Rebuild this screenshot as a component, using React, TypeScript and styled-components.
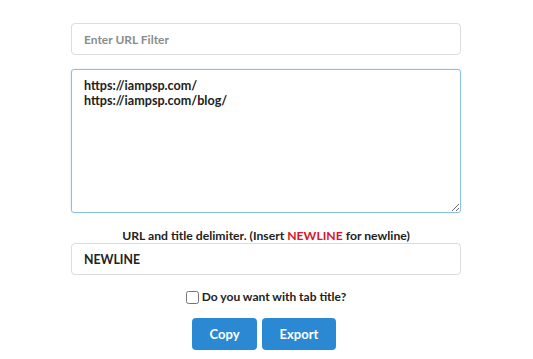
import React from "react";
import styled, { createGlobalStyle } from "styled-components";

const Global = createGlobalStyle`
  html, body { margin: 0; padding: 0; background: #fff; }
  body { font-family: Lato, "Open Sans", sans-serif; color: #333; }
  * { box-sizing: border-box; }
`;

const Page = styled.div`
  width: 390px;
  margin: 0 0 0 71px;
  padding-top: 23px;
  display: flex;
  flex-direction: column;
`;

const TextInput = styled.input<{ $bold?: boolean }>`
  width: 100%;
  height: 32px;
  border: 1px solid #dcdcdc;
  border-radius: 4px;
  padding: 0 12px;
  font-family: Lato, sans-serif;
  font-size: ${(p) => (p.$bold ? "12.3px" : "12px")};
  font-weight: 700;
  color: #222;
  outline: none;
  &::placeholder { color: #8c8c8c; font-weight: 700; }
`;

const Area = styled.textarea`
  margin-top: 14px;
  width: 100%;
  height: 144px;
  border: 1px solid #8fbfe0;
  border-radius: 3px;
  padding: 8px 12px;
  font-family: Lato, sans-serif;
  font-size: 12.6px;
  font-weight: 700;
  line-height: 15px;
  color: #222;
  outline: none;
  resize: both;
  box-shadow: 0 0 2px rgba(102, 175, 233, 0.35);
`;

const Label = styled.div`
  margin-top: 16px;
  text-align: center;
  font-size: 12.2px;
  font-weight: 700;
  color: #222;
  line-height: 14px;
`;

const Red = styled.span`
  color: #e0141e;
`;

const CheckRow = styled.label`
  margin-top: 14px;
  display: flex;
  align-items: center;
  justify-content: center;
  gap: 3px;
  font-size: 12px;
  font-weight: 700;
  color: #222;
  line-height: 16px;
  input { margin: 0; width: 13px; height: 13px; }
`;

const Buttons = styled.div`
  margin-top: 13px;
  display: flex;
  justify-content: center;
  gap: 5px;
  padding-right: 4px;
`;

const Btn = styled.button<{ $w: number }>`
  width: ${(p) => p.$w}px;
  height: 32px;
  border: none;
  border-radius: 4px;
  background: #2b88d2;
  color: #fff;
  font-family: Lato, sans-serif;
  font-size: 13px;
  font-weight: 700;
  cursor: pointer;
`;

export default function App() {
  return (
    <>
      <Global />
      <Page>
        <TextInput placeholder="Enter URL Filter" />
        <Area defaultValue={"https://iampsp.com/\nhttps://iampsp.com/blog/"} />
        <Label>
          URL and title delimiter. (Insert <Red>NEWLINE</Red> for newline)
        </Label>
        <TextInput $bold defaultValue="NEWLINE" />
        <CheckRow>
          <input type="checkbox" />
          Do you want with tab title?
        </CheckRow>
        <Buttons>
          <Btn $w={65}>Copy</Btn>
          <Btn $w={74}>Export</Btn>
        </Buttons>
      </Page>
    </>
  );
}
